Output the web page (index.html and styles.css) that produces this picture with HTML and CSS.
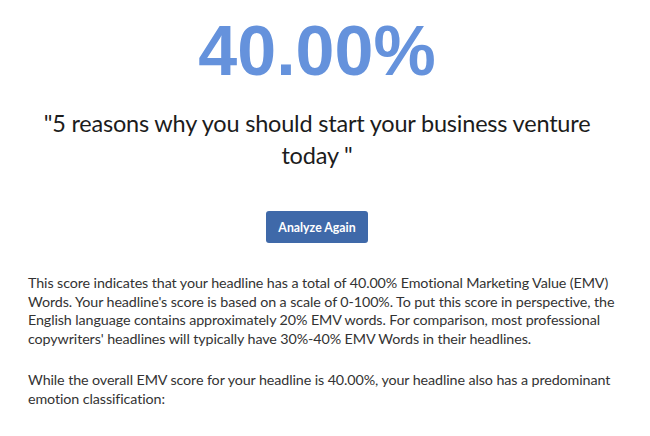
FILE: index.html
```html
<!DOCTYPE html>
<html lang="en">
<head>
<meta charset="utf-8">
<title>Headline Analyzer Result</title>
<link rel="stylesheet" href="styles.css">
</head>
<body>
<main class="result">
  <div class="score">40.00%</div>
  <h1 class="headline">"5 reasons why you should start your business venture today "</h1>
  <div class="actions"><button class="btn" type="button">Analyze Again</button></div>
  <p class="text">This score indicates that your headline has a total of 40.00% Emotional Marketing Value (EMV) Words. Your headline's score is based on a scale of 0-100%. To put this score in perspective, the English language contains approximately 20% EMV words. For comparison, most professional copywriters' headlines will typically have 30%-40% EMV Words in their headlines.</p>
  <p class="text">While the overall EMV score for your headline is 40.00%, your headline also has a predominant emotion classification:</p>
</main>
</body>
</html>
```
FILE: styles.css
```css
html, body {
  margin: 0;
  padding: 0;
  background: #ffffff;
}
body {
  font-family: Lato, "Open Sans", sans-serif;
  color: #333333;
}
.result {
  width: 578px;
  margin-left: 28px;
  padding-top: 16px;
}
.score {
  font-family: "Liberation Sans", Arial, sans-serif;
  font-weight: 700;
  font-size: 70px;
  line-height: 70px;
  color: #6592dc;
  text-align: center;
}
.headline {
  margin: 21px 0 0;
  font-weight: 400;
  font-size: 23.5px;
  letter-spacing: -0.2px;
  line-height: 32px;
  color: #1c1c1c;
  text-align: center;
}
.actions {
  display: flex;
  justify-content: center;
  margin-top: 40px;
}
.btn {
  width: 102px;
  height: 32px;
  border: 0;
  border-radius: 3px;
  background: #3f69a9;
  color: #ffffff;
  font-family: Lato, "Open Sans", sans-serif;
  font-weight: 700;
  font-size: 12.3px;
  padding: 0;
}
.text {
  margin: 0 -14px 22px 0;
  font-size: 14.3px;
  letter-spacing: -0.1px;
  line-height: 18.7px;
}
.actions + .text {
  margin-top: 31px;
}
```
